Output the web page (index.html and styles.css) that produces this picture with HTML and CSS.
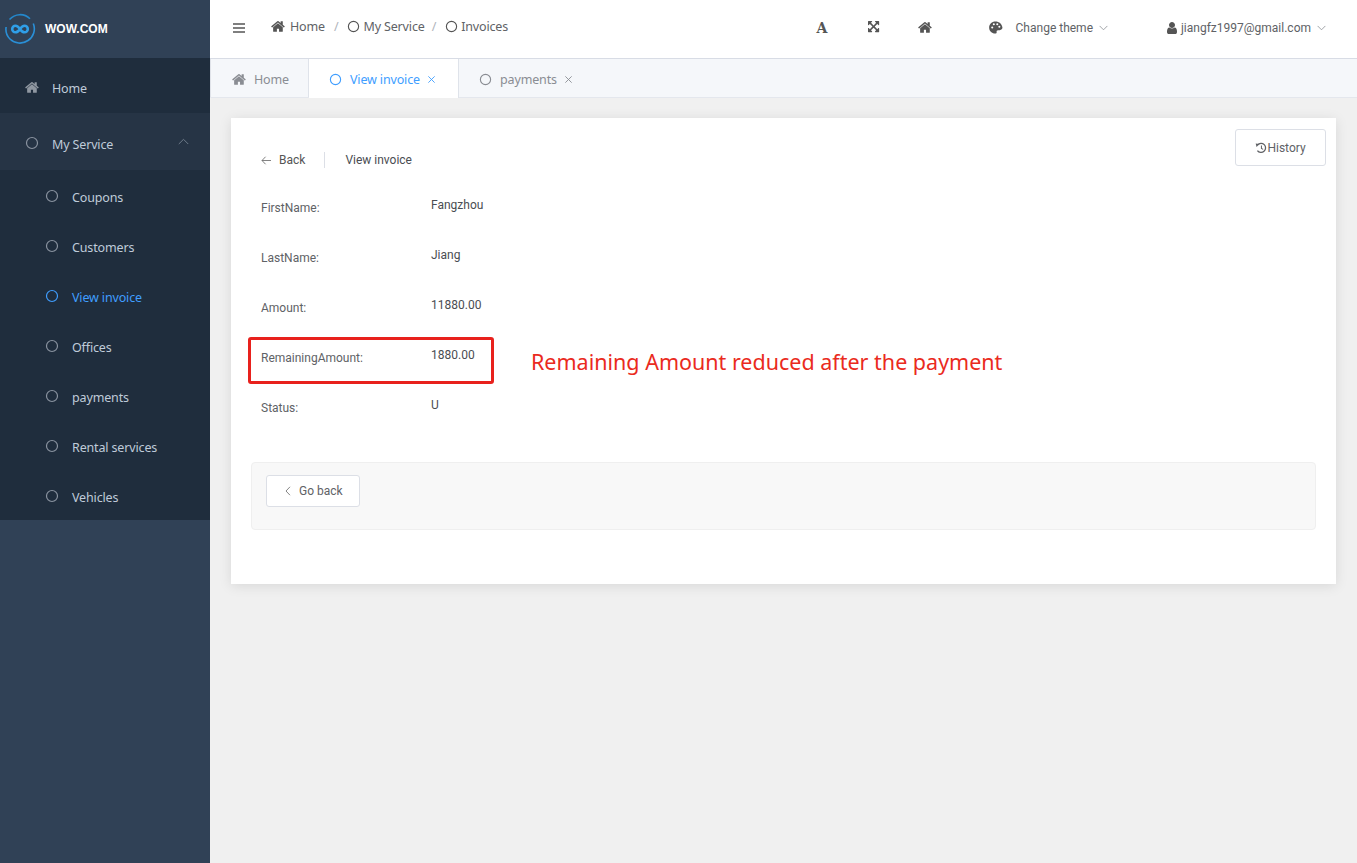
FILE: index.html
```html
<!DOCTYPE html>
<html lang="en">
<head>
<meta charset="utf-8">
<title>View invoice</title>
<link rel="stylesheet" href="styles.css">
</head>
<body>
<svg class="defs" width="0" height="0" aria-hidden="true">
  <symbol id="i-home" viewBox="0 0 1792 1792"><path d="M1408 992v480q0 26-19 45t-45 19h-384v-384h-256v384h-384q-26 0-45-19t-19-45v-480q0-1 .5-3t.5-3l575-474 575 474q1 2 1 6zm223-69l-62 74q-8 9-21 11h-3q-13 0-21-7l-692-577-692 577q-12 8-24 7-13-2-21-11l-62-74q-8-10-7-23.500t11-21.500l719-599q32-26 76-26t76 26l244 204v-195q0-14 9-23t23-9h192q14 0 23 9t9 23v408l219 182q10 8 11 21.500t-7 23.500z" fill="currentColor"/></symbol>
  <symbol id="i-user" viewBox="0 0 1792 1792"><path d="M1536 1399q0 109-62.500 187t-150.500 78h-854q-88 0-150.500-78t-62.500-187q0-85 8.500-160.500t31.500-152 58.500-131 94-89 134.500-34.500q131 128 313 128t313-128q76 0 134.500 34.500t94 89 58.500 131 31.500 152 8.500 160.500zm-256-887q0 159-112.500 271.500t-271.500 112.500-271.500-112.500-112.500-271.500 112.500-271.500 271.500-112.500 271.500 112.500 112.500 271.500z" fill="currentColor"/></symbol>
  <symbol id="i-expand" viewBox="0 0 1792 1792"><path d="M1283 413l-355 355 355 355 144-144q29-31 70-14 39 17 39 59v448q0 26-19 45t-45 19h-448q-42 0-59-40-17-39 14-69l144-144-355-355-355 355 144 144q31 30 14 69-17 40-59 40h-448q-26 0-45-19t-19-45v-448q0-42 40-59 39-17 69 14l144 144 355-355-355-355-144 144q-19 19-45 19-12 0-24-5-40-17-40-59v-448q0-26 19-45t45-19h448q42 0 59 40 17 39-14 69l-144 144 355 355 355-355-144-144q-31-30-14-69 17-40 59-40h448q26 0 45 19t19 45v448q0 42-39 59-13 5-25 5-26 0-45-19z" fill="currentColor"/></symbol>
  <symbol id="i-circle" viewBox="0 0 14 14"><circle cx="7" cy="7" r="5.500" fill="none" stroke="currentColor" stroke-width="1.200"/></symbol>
  <symbol id="i-down" viewBox="0 0 10 6"><path d="M.7.7 5 5 9.300.7" fill="none" stroke="currentColor" stroke-width=".9"/></symbol>
  <symbol id="i-x" viewBox="0 0 10 10"><path d="M1.500 1.500l7 7m0-7l-7 7" fill="none" stroke="currentColor" stroke-width="1"/></symbol>
</svg>

<aside class="sidebar">
  <div class="brand">
    <svg class="logo" viewBox="0 0 32 32" aria-hidden="true">
      <path d="M5.500 6.500A14 14 0 0 1 26 5.800" fill="none" stroke="#2488cc" stroke-width="1.600"/>
      <path d="M29.300 10.500A14 14 0 0 1 24 27.500 14 14 0 0 1 6 26a14 14 0 0 1-3.900-12" fill="none" stroke="#2a8fd6" stroke-width="1.600"/>
      <path d="M16 16c-1.600-2.400-2.800-3.300-4.500-3.300a3.300 3.300 0 0 0 0 6.600c1.700 0 2.900-.9 4.500-3.300s2.800-3.300 4.500-3.300a3.300 3.300 0 0 1 0 6.600c-1.700 0-2.900-.9-4.500-3.300z" fill="none" stroke="#2f9fe8" stroke-width="2.600"/>
    </svg>
    <span class="brand-name">WOW.COM</span>
  </div>
  <nav>
    <a class="menu-top menu-home"><svg class="ic-home"><use href="#i-home"/></svg><span>Home</span></a>
    <a class="menu-top menu-service"><svg class="ic-circle"><use href="#i-circle"/></svg><span>My Service</span>
      <svg class="menu-caret" viewBox="0 0 10 6"><path d="M.7 5.300 5 1l4.300 4.300" fill="none" stroke="currentColor" stroke-width=".9"/></svg></a>
    <div class="submenu">
      <a class="sub-item"><svg class="ic-circle"><use href="#i-circle"/></svg><span>Coupons</span></a>
      <a class="sub-item"><svg class="ic-circle"><use href="#i-circle"/></svg><span>Customers</span></a>
      <a class="sub-item active"><svg class="ic-circle"><use href="#i-circle"/></svg><span>View invoice</span></a>
      <a class="sub-item"><svg class="ic-circle"><use href="#i-circle"/></svg><span>Offices</span></a>
      <a class="sub-item"><svg class="ic-circle"><use href="#i-circle"/></svg><span>payments</span></a>
      <a class="sub-item"><svg class="ic-circle"><use href="#i-circle"/></svg><span>Rental services</span></a>
      <a class="sub-item"><svg class="ic-circle"><use href="#i-circle"/></svg><span>Vehicles</span></a>
    </div>
  </nav>
</aside>

<div class="main">
  <header class="topbar">
    <svg class="hamburger" viewBox="0 0 12 10" aria-hidden="true"><path d="M0 1h12M0 5h12M0 9h12" stroke="currentColor" stroke-width="1.600"/></svg>
    <div class="crumbs">
      <svg class="crumb-home"><use href="#i-home"/></svg><span class="crumb-text">Home</span>
      <span class="crumb-sep">/</span>
      <svg class="crumb-circle"><use href="#i-circle"/></svg><span class="crumb-text">My Service</span>
      <span class="crumb-sep crumb-sep-tight">/</span>
      <svg class="crumb-circle"><use href="#i-circle"/></svg><span class="crumb-text">Invoices</span>
    </div>
    <div class="tools">
      <span class="tool-a">A</span>
      <svg class="tool-expand"><use href="#i-expand"/></svg>
      <svg class="tool-home"><use href="#i-home"/></svg>
      <div class="theme">
        <svg class="palette" viewBox="0 0 16 16" aria-hidden="true"><path fill-rule="evenodd" fill="currentColor" d="M8 1.500C4 1.500 1.200 4.400 1.200 8s2.900 6.500 6.300 6.500c1.300 0 1.900-.8 1.700-1.800-.2-1 .3-1.900 1.500-1.900h1.800c1.800 0 2.900-1.200 2.900-3C14.800 4 11.800 1.500 8 1.500zM4.500 9a1.100 1.100 0 1 1 0-2.200 1.100 1.100 0 0 1 0 2.200zm1.700-3.300a1.100 1.100 0 1 1 0-2.200 1.100 1.100 0 0 1 0 2.200zm3.700 0a1.100 1.100 0 1 1 0-2.200 1.100 1.100 0 0 1 0 2.200zm2.200 2.600a1.100 1.100 0 1 1 0-2.200 1.100 1.100 0 0 1 0 2.200z"/></svg>
        <span>Change theme</span>
        <svg class="down"><use href="#i-down"/></svg>
      </div>
      <div class="account">
        <svg class="user"><use href="#i-user"/></svg>
        <span>jiangfz1997@gmail.com</span>
        <svg class="down"><use href="#i-down"/></svg>
      </div>
    </div>
  </header>

  <div class="tabs">
    <a class="tab tab-home"><svg class="tab-ic-home"><use href="#i-home"/></svg><span>Home</span></a>
    <a class="tab tab-active"><svg class="tab-ic"><use href="#i-circle"/></svg><span>View invoice</span><svg class="tab-x"><use href="#i-x"/></svg></a>
    <a class="tab tab-pay"><svg class="tab-ic"><use href="#i-circle"/></svg><span>payments</span><svg class="tab-x"><use href="#i-x"/></svg></a>
  </div>

  <main class="content">
    <section class="card">
      <button class="history" type="button">
        <svg viewBox="0 0 14 14" aria-hidden="true"><path d="M3 3.400A5.300 5.300 0 1 1 2.800 10" fill="none" stroke="currentColor" stroke-width="1.500"/><path d="M.8 1.800 5.200 2.400 1.800 5.800z" fill="currentColor"/><path d="M7.500 4.200V7.500l2 1.100" fill="none" stroke="currentColor" stroke-width="1.200"/></svg>History
      </button>
      <div class="page-head">
        <a class="back"><svg viewBox="0 0 12 10" aria-hidden="true"><path d="M5 .8 1 5l4 4.200M1 5h10" fill="none" stroke="currentColor" stroke-width=".9"/></svg>Back</a>
        <span class="head-div"></span>
        <span class="head-title">View invoice</span>
      </div>
      <dl class="fields">
        <div class="field"><dt>FirstName:</dt><dd>Fangzhou</dd></div>
        <div class="field"><dt>LastName:</dt><dd>Jiang</dd></div>
        <div class="field"><dt>Amount:</dt><dd>11880.00</dd></div>
        <div class="field"><dt>RemainingAmount:</dt><dd>1880.00</dd>
          <span class="mark"></span>
          <span class="note">Remaining Amount reduced after the payment</span>
        </div>
        <div class="field"><dt>Status:</dt><dd>U</dd></div>
      </dl>
      <div class="actions">
        <button class="go-back" type="button"><svg viewBox="0 0 6 10" aria-hidden="true"><path d="M5 .8 1 5l4 4.200" fill="none" stroke="currentColor" stroke-width=".9"/></svg>Go back</button>
      </div>
    </section>
  </main>
</div>
</body>
</html>
```
FILE: styles.css
```css
* { box-sizing: border-box; }
html, body { height: 100%; }
body {
  margin: 0;
  display: flex;
  height: 863px;
  overflow: hidden;
  background: #f0f0f0;
  font-family: Roboto, "Liberation Sans", sans-serif;
  color: #606266;
}
.defs { position: absolute; }
svg { display: block; flex: none; }

/* Sidebar */
.sidebar {
  width: 210px;
  flex: none;
  background: #304156;
  font-family: "Noto Sans", sans-serif;
  font-size: 12.500px;
  letter-spacing: -.15px;
  color: #bfcbd9;
}
.brand {
  height: 58px;
  display: flex;
  align-items: center;
  padding-left: 4px;
}
.logo { width: 32px; height: 32px; }
.brand-name {
  margin-left: 9px;
  font-family: "Liberation Sans", sans-serif;
  font-size: 12px;
  font-weight: 700;
  letter-spacing: 0;
  color: #fff;
}
.menu-top, .sub-item { display: flex; align-items: center; }
.menu-top { padding-left: 25px; }
.menu-home { height: 55px; background: #1f2d3d; padding-top: 5px; }
.menu-service { height: 57px; background: #263445; padding-top: 5px; }
.ic-home { width: 15px; height: 15px; color: #8f97a1; margin-right: 12px; margin-top: -2px; }
.ic-circle { width: 14px; height: 14px; color: #8a93a0; margin-right: 13px; margin-top: -2px; }
.menu-caret { width: 11px; height: 7px; color: #6f7c8b; margin-left: 65px; margin-top: -6px; }
.submenu { background: #1f2d3d; }
.sub-item { height: 50px; padding-left: 45px; padding-top: 4px; }
.sub-item.active { color: #409eff; }
.sub-item.active .ic-circle { color: #409eff; }

/* Main column */
.main { flex: 1; min-width: 0; display: flex; flex-direction: column; }
.topbar {
  height: 59px;
  flex: none;
  background: #fff;
  border-bottom: 1px solid #d8dce5;
  display: flex;
  align-items: center;
  padding-left: 23px;
}
.hamburger { width: 12px; height: 10px; color: #555; margin-top: -3px; }
.crumbs {
  display: flex;
  align-items: center;
  margin-left: 26px;
  margin-top: -6px;
  font-family: "Noto Sans", sans-serif;
  font-size: 12.500px;
  letter-spacing: -.15px;
  color: #606266;
}
.crumb-home { width: 15px; height: 15px; color: #555; margin-right: 4px; }
.crumb-circle { width: 13px; height: 13px; color: #555; margin-right: 3px; }
.crumb-sep { margin: 0 9px; color: #b0b4bb; }
.crumb-sep-tight { margin: 0 9px 0 7px; }
.tools {
  margin-left: auto;
  display: flex;
  align-items: center;
  font-size: 12px;
  color: #606266;
  margin-top: -3px;
}
.tool-a {
  width: 12px;
  font-family: "DejaVu Serif", serif;
  font-weight: 700;
  font-size: 14px;
  color: #555;
}
.tool-expand { width: 13px; height: 13px; color: #555; margin-left: 39px; }
.tool-home { width: 15px; height: 15px; color: #555; margin-left: 37px; }
.theme { display: flex; align-items: center; margin-left: 55px; }
.palette { width: 15px; height: 15px; color: #555; margin-right: 13px; }
.down { width: 9px; height: 6px; color: #8c8f94; margin-left: 6px; }
.account { display: flex; align-items: center; margin-left: 57px; margin-right: 31px; }
.user { width: 14px; height: 14px; color: #555; margin-right: 2px; }

/* Tabs */
.tabs {
  height: 39px;
  flex: none;
  display: flex;
  background: #f5f7fa;
  border-bottom: 1px solid #e4e7ed;
  font-family: "Noto Sans", sans-serif;
  font-size: 12.500px;
  letter-spacing: -.15px;
  color: #8a8d93;
}
.tab { display: flex; align-items: center; border-right: 1px solid #dfe3ea; padding-top: 2px; }
.tab-home { width: 99px; padding-left: 21px; border-left: 1px solid #e0e3e9; }
.tab-ic-home { width: 15px; height: 15px; color: #8a8d93; margin-right: 7px; }
.tab-active { width: 150px; padding-left: 20px; background: #fff; color: #409eff; height: 39px; }
.tab-pay { width: 131px; padding-left: 20px; border-right: 0; }
.tab-ic { width: 13px; height: 13px; margin-right: 8px; }
.tab-x { width: 9px; height: 9px; margin-left: 7px; }

/* Content */
.content { flex: 1; padding: 20px 21px; }
.card {
  position: relative;
  height: 466px;
  background: #fff;
  box-shadow: 0 2px 12px rgba(0, 0, 0, .1);
  padding: 31px 20px 0;
  font-size: 12px;
}
.history {
  position: absolute;
  top: 11px;
  right: 10px;
  width: 91px;
  height: 37px;
  display: flex;
  align-items: center;
  justify-content: center;
  background: #fff;
  border: 1px solid #dcdfe6;
  border-radius: 3px;
  font: inherit;
  color: #606266;
}
.history svg { width: 12px; height: 12px; }
.page-head {
  display: flex;
  align-items: center;
  height: 22px;
  padding-left: 10px;
  color: #4a4d52;
}
.back { display: flex; align-items: center; color: #555; }
.back svg { width: 11px; height: 9px; margin-right: 7px; color: #666; }
.head-div { width: 1px; height: 16px; background: #dcdfe6; margin: 0 20px 0 19px; }
.fields { margin: 19px 0 0; padding-left: 10px; }
.field { position: relative; display: flex; height: 50px; }
dt { width: 170px; padding-top: 6px; line-height: 24px; color: #606266; }
dd { margin: 0; padding-top: 3px; line-height: 24px; color: #4a4d52; }
.mark {
  position: absolute;
  left: -13px;
  top: -3px;
  width: 246px;
  height: 47px;
  border: 3px solid #e8211d;
  border-radius: 3px;
}
.note {
  position: absolute;
  left: 270px;
  top: 6px;
  font-family: "Noto Sans", sans-serif;
  font-size: 21.500px;
  line-height: 32px;
  white-space: nowrap;
  color: #ea2a20;
}
.actions {
  margin-top: 22px;
  height: 68px;
  padding: 12px 14px;
  background: #f8f8f8;
  border: 1px solid #efefef;
  border-radius: 4px;
}
.go-back {
  display: flex;
  align-items: center;
  width: 94px;
  height: 32px;
  padding: 0 0 0 18px;
  background: #fff;
  border: 1px solid #dcdfe6;
  border-radius: 3px;
  font: inherit;
  color: #606266;
}
.go-back svg { width: 6px; height: 10px; margin-right: 8px; color: #777; }
```
